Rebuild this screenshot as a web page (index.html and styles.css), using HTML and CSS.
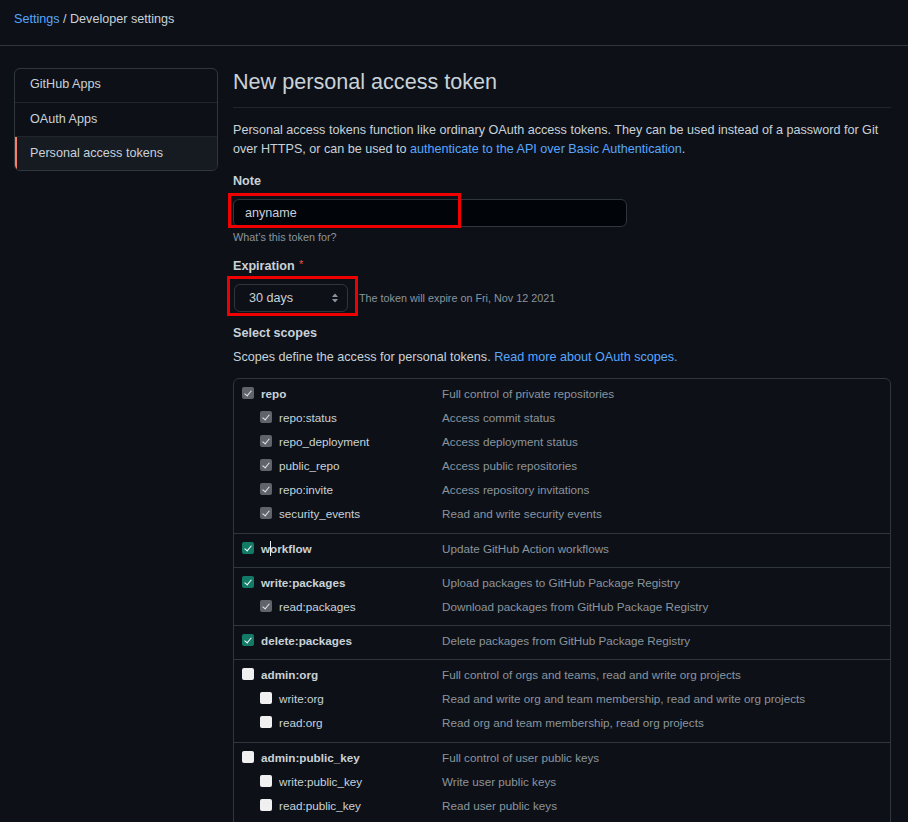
FILE: index.html
```html
<!DOCTYPE html>
<html lang="en">
<head>
<meta charset="utf-8">
<title>New personal access token</title>
<link rel="stylesheet" href="styles.css">
</head>
<body>
<header class="topbar">
  <nav class="crumbs"><a class="link" href="#">Settings</a> / Developer settings</nav>
</header>
<div class="layout">
  <aside class="sidenav">
    <a class="navitem" href="#">GitHub Apps</a>
    <a class="navitem" href="#">OAuth Apps</a>
    <a class="navitem selected" href="#">Personal access tokens</a>
  </aside>
  <main class="main">
    <h1 class="heading">New personal access token</h1>
    <p class="intro">Personal access tokens function like ordinary OAuth access tokens. They can be used instead of a password for Git over HTTPS, or can be used to <a class="link" href="#">authenticate to the API over Basic Authentication</a>.</p>

    <div class="field note-field">
      <label class="label">Note</label>
      <div class="input">anyname</div>
      <div class="hint">What’s this token for?</div>
      <span class="redbox redbox-note"></span>
    </div>

    <div class="field exp-field">
      <label class="label">Expiration <span class="req">*</span></label>
      <div class="exp-row">
        <div class="select">30 days
          <svg class="updown" width="8" height="12" viewBox="0 0 8 12"><path d="M4 1.5 7 5H1z" fill="#8b949e"/><path d="M4 10.5 1 7h6z" fill="#8b949e"/></svg>
        </div>
        <span class="exp-note">The token will expire on Fri, Nov 12 2021</span>
      </div>
      <span class="redbox redbox-exp"></span>
    </div>

    <div class="field scopes-field">
      <label class="label">Select scopes</label>
      <p class="scopes-desc">Scopes define the access for personal tokens. <a class="link" href="#">Read more about OAuth scopes.</a></p>
    </div>

    <div class="scopes">
      <div class="group multi">
        <div class="row top"><span class="cb grey"></span><span class="name">repo</span><span class="desc">Full control of private repositories</span></div>
        <div class="row sub"><span class="cb grey"></span><span class="name">repo:status</span><span class="desc">Access commit status</span></div>
        <div class="row sub"><span class="cb grey"></span><span class="name">repo_deployment</span><span class="desc">Access deployment status</span></div>
        <div class="row sub"><span class="cb grey"></span><span class="name">public_repo</span><span class="desc">Access public repositories</span></div>
        <div class="row sub"><span class="cb grey"></span><span class="name">repo:invite</span><span class="desc">Access repository invitations</span></div>
        <div class="row sub"><span class="cb grey"></span><span class="name">security_events</span><span class="desc">Read and write security events</span></div>
      </div>
      <div class="group">
        <div class="row top"><span class="cb teal"></span><span class="name cursor-host">workflow<span class="ibeam"></span></span><span class="desc">Update GitHub Action workflows</span></div>
      </div>
      <div class="group">
        <div class="row top"><span class="cb teal"></span><span class="name">write:packages</span><span class="desc">Upload packages to GitHub Package Registry</span></div>
        <div class="row sub"><span class="cb grey"></span><span class="name">read:packages</span><span class="desc">Download packages from GitHub Package Registry</span></div>
      </div>
      <div class="group">
        <div class="row top"><span class="cb teal"></span><span class="name">delete:packages</span><span class="desc">Delete packages from GitHub Package Registry</span></div>
      </div>
      <div class="group multi">
        <div class="row top"><span class="cb"></span><span class="name">admin:org</span><span class="desc">Full control of orgs and teams, read and write org projects</span></div>
        <div class="row sub"><span class="cb"></span><span class="name">write:org</span><span class="desc">Read and write org and team membership, read and write org projects</span></div>
        <div class="row sub"><span class="cb"></span><span class="name">read:org</span><span class="desc">Read org and team membership, read org projects</span></div>
      </div>
      <div class="group multi">
        <div class="row top"><span class="cb"></span><span class="name">admin:public_key</span><span class="desc">Full control of user public keys</span></div>
        <div class="row sub"><span class="cb"></span><span class="name">write:public_key</span><span class="desc">Write user public keys</span></div>
        <div class="row sub"><span class="cb"></span><span class="name">read:public_key</span><span class="desc">Read user public keys</span></div>
      </div>
      <div class="group multi">
        <div class="row top"><span class="cb"></span><span class="name">admin:repo_hook</span><span class="desc">Full control of repository hooks</span></div>
        <div class="row sub"><span class="cb"></span><span class="name">write:repo_hook</span><span class="desc">Write repository hooks</span></div>
        <div class="row sub"><span class="cb"></span><span class="name">read:repo_hook</span><span class="desc">Read repository hooks</span></div>
      </div>
    </div>
  </main>
</div>
</body>
</html>
```
FILE: styles.css
```css
* { box-sizing: border-box; }

html, body {
  margin: 0;
  background: #0d1117;
  color: #c9d1d9;
  font-family: "Liberation Sans", Arial, sans-serif;
  font-size: 12.6px;
  line-height: 19px;
}

a { text-decoration: none; }
.link { color: #58a6ff; }

.topbar {
  height: 46px;
  padding: 10px 14px 0;
  border-bottom: 1px solid #30363d;
}

.crumbs { line-height: 19px; }

.layout {
  display: flex;
  gap: 15px;
  padding: 22px 17px 0 14px;
}

.sidenav {
  flex: 0 0 204px;
  align-self: flex-start;
  border: 1px solid #30363d;
  border-radius: 6px;
  overflow: hidden;
  display: flex;
  flex-direction: column;
}

.navitem {
  display: block;
  height: 34px;
  line-height: 32px;
  padding-left: 15px;
  color: #c9d1d9;
  border-top: 1px solid #21262d;
}
.navitem:first-child { border-top: 0; height: 33px; line-height: 31px; }

.navitem.selected {
  background: #161b22;
  box-shadow: inset 2px 0 0 #f78166;
  line-height: 33px;
}

.main {
  flex: 1 1 auto;
  min-width: 0;
}

.heading {
  margin: 0;
  font-size: 21.6px;
  font-weight: 400;
  line-height: 27px;
  padding-bottom: 12px;
  border-bottom: 1px solid #21262d;
  color: #c9d1d9;
}

.intro {
  margin: 13px 0 0;
  line-height: 19px;
}

.field { position: relative; }

.label {
  display: block;
  font-weight: 700;
  line-height: 19px;
}

.note-field { margin-top: 13px; }

.input {
  margin-top: 8px;
  width: 394px;
  height: 28px;
  background: #010409;
  border: 1px solid #30363d;
  border-radius: 6px;
  padding: 0 11px;
  line-height: 26px;
  color: #c9d1d9;
}

.hint {
  margin-top: 2px;
  font-size: 10.8px;
  line-height: 16px;
  color: #8b949e;
}

.redbox {
  position: absolute;
  border: 3px solid #f00000;
  pointer-events: none;
}
.redbox-note { left: -5px; top: 21px; width: 233px; height: 35px; }
.redbox-exp { left: -6px; top: 19px; width: 131px; height: 40px; }

.exp-field { margin-top: 12px; }

.req { color: #f85149; font-weight: 400; font-size: 10.8px; position: relative; top: -2px; margin-left: 1px; }

.exp-row {
  margin-top: 8px;
  display: flex;
  align-items: center;
}

.select {
  position: relative;
  width: 114px;
  height: 28px;
  margin-left: 1px;
  border: 1px solid #30363d;
  border-radius: 6px;
  background: #0d1117;
  padding-left: 14px;
  line-height: 26px;
  color: #c9d1d9;
}

.updown { position: absolute; right: 8px; top: 7px; }

.exp-note {
  margin-left: 11px;
  font-size: 10.8px;
  color: #8b949e;
}

.scopes-field { margin-top: 12px; }

.scopes-desc { margin: 5px 0 0; }

.scopes {
  margin-top: 11px;
  border: 1px solid #30363d;
  border-radius: 6px;
  font-size: 11.7px;
}

.group {
  padding: 2px 8px 7px;
  border-top: 1px solid #30363d;
}
.group.multi { padding-bottom: 8px; }
.group:first-child { border-top: 0; }

.row {
  display: flex;
  align-items: center;
  height: 24px;
}

.row.sub { padding-left: 18px; }

.cb {
  flex: 0 0 12px;
  width: 12px;
  height: 12px;
  border-radius: 2px;
  background: #f0f0f0;
  margin-right: 7px;
  position: relative;
}

.cb.grey { background: #5f646b; }
.cb.teal { background: #137a68; }

.cb.grey::after, .cb.teal::after {
  content: "";
  position: absolute;
  left: 4px;
  top: 1.5px;
  width: 3px;
  height: 6px;
  border: solid #e6e6e6;
  border-width: 0 1.6px 1.6px 0;
  transform: rotate(40deg);
}
.cb.teal::after { border-color: #ffffff; }

.name {
  flex: 0 0 auto;
  width: 181px;
  color: #c9d1d9;
}
.row.top .name { font-weight: 700; }
.row.sub .name { width: 163px; }

.desc { color: #8b949e; white-space: nowrap; }

.cursor-host { position: relative; }
.ibeam {
  position: absolute;
  left: 9px;
  top: 2px;
  width: 1px;
  height: 15px;
  background: #e6edf3;
}
```
